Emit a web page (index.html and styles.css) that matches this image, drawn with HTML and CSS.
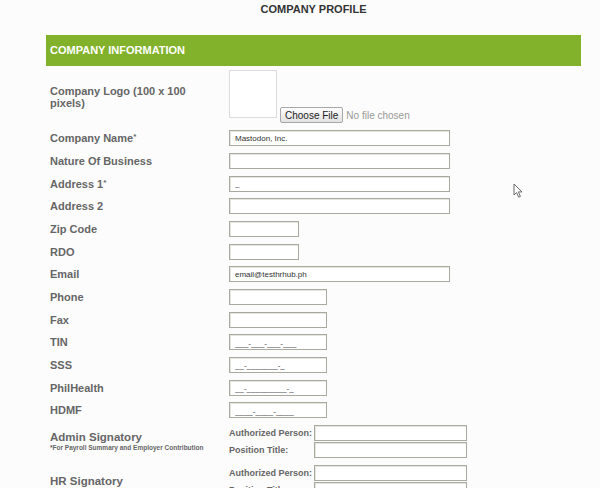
FILE: index.html
```html
<!DOCTYPE html>
<html lang="en">
<head>
    <meta charset="UTF-8">
    <title>Company Profile</title>
    <link rel="stylesheet" href="styles.css">
</head>
<body>
    <div class="page">
        <h1 class="page-title">COMPANY PROFILE</h1>

        <div class="section-head">COMPANY INFORMATION</div>

        <div class="form">
            <!-- logo -->
            <div class="row row-logo">
                <div class="label">Company Logo (100 x 100 pixels)</div>
                <div class="field">
                    <span class="logo-box"></span>
                    <input type="file" class="file">
                </div>
            </div>

            <div class="row">
                <label class="label">Company Name<sup>*</sup></label>
                <div class="field"><input type="text" class="text wide" value="Mastodon, Inc."></div>
            </div>
            <div class="row">
                <label class="label">Nature Of Business</label>
                <div class="field"><input type="text" class="text wide"></div>
            </div>
            <div class="row">
                <label class="label">Address 1<sup>*</sup></label>
                <div class="field"><input type="text" class="text wide" value="_"></div>
            </div>
            <div class="row">
                <label class="label">Address 2</label>
                <div class="field"><input type="text" class="text wide"></div>
            </div>
            <div class="row">
                <label class="label">Zip Code</label>
                <div class="field"><input type="text" class="text short"></div>
            </div>
            <div class="row">
                <label class="label">RDO</label>
                <div class="field"><input type="text" class="text short"></div>
            </div>
            <div class="row">
                <label class="label">Email</label>
                <div class="field"><input type="text" class="text wide" value="email@testhrhub.ph"></div>
            </div>
            <div class="row">
                <label class="label">Phone</label>
                <div class="field"><input type="text" class="text medium"></div>
            </div>
            <div class="row">
                <label class="label">Fax</label>
                <div class="field"><input type="text" class="text medium"></div>
            </div>
            <div class="row">
                <label class="label">TIN</label>
                <div class="field"><input type="text" class="text medium mask" value="___-___-___-___"></div>
            </div>
            <div class="row">
                <label class="label">SSS</label>
                <div class="field"><input type="text" class="text medium mask" value="__-_______-_"></div>
            </div>
            <div class="row">
                <label class="label">PhilHealth</label>
                <div class="field"><input type="text" class="text medium mask" value="__-_________-_"></div>
            </div>
            <div class="row">
                <label class="label">HDMF</label>
                <div class="field"><input type="text" class="text medium mask" value="____-____-____"></div>
            </div>

            <!-- signatories -->
            <div class="row row-sign">
                <div class="label">
                    Admin Signatory
                    <span class="note">*For Payroll Summary and Employer Contribution</span>
                </div>
                <div class="field sign-fields">
                    <span class="sub-label">Authorized Person:</span>
                    <input type="text" class="text sign">
                    <span class="sub-label">Position Title:</span>
                    <input type="text" class="text sign">
                </div>
            </div>
            <div class="row row-sign">
                <div class="label">HR Signatory</div>
                <div class="field sign-fields">
                    <span class="sub-label">Authorized Person:</span>
                    <input type="text" class="text sign">
                    <span class="sub-label">Position Title:</span>
                    <input type="text" class="text sign">
                </div>
            </div>
        </div>
    </div>

    <!-- mouse pointer left in the capture -->
    <svg class="cursor" width="11" height="16" viewBox="0 0 11 16">
        <path d="M1 1 L1 12 L3.6 9.6 L5.6 14.2 L7.4 13.4 L5.4 8.9 L9 8.9 Z" fill="#fff" stroke="#6a6a6a" stroke-width="1" stroke-linejoin="round"/>
    </svg>
</body>
</html>
```

FILE: styles.css
```css
html, body {
    margin: 0;
    overflow: hidden;
}

body {
    background-color: #fcfcfc;
    font-family: "Liberation Sans", Arial, sans-serif;
    color: #666;
}

.page {
    width: 535px;
    margin-left: 46px;
}

/* 제목 */
.page-title {
    margin: 0;
    padding-top: 3px;
    height: 32px;
    font-size: 11px;
    line-height: 13px;
    text-align: center;
    color: #333;
}

.section-head {
    height: 31px;
    line-height: 31px;
    padding-left: 4px;
    background-color: #82b22b;
    color: #fff;
    font-size: 11px;
    font-weight: bold;
}

/* 폼 줄 */
.row {
    display: grid;
    grid-template-columns: 183px 1fr;
    align-items: center;
    height: 22.67px;
}

.row-logo {
    height: 61px;
}

.row-logo .field {
    align-self: start;
    padding-top: 4px;
}

.label {
    padding-left: 4px;
    padding-right: 8px;
    font-size: 11px;
    font-weight: bold;
    line-height: 12px;
    color: #666;
}

.label sup {
    font-size: 8px;
    vertical-align: 3px;
    line-height: 0;
}

.field {
    display: flex;
    align-items: flex-end;
}

.logo-box {
    width: 46px;
    height: 46px;
    border: 1px solid #ddd;
    background: #fff;
}

.file {
    margin-left: 3px;
    margin-bottom: -5px;
    font-family: "Liberation Sans", Arial, sans-serif;
    font-size: 10px;
    color: #999;
}

.file::file-selector-button {
    font-family: "Liberation Sans", Arial, sans-serif;
    font-size: 10px;
    color: #222;
    height: 16px;
    padding: 0 4px;
    margin-right: 3px;
    border: 1px solid #a7a7a7;
    border-radius: 2px;
    background: linear-gradient(#fefefe, #e2e2e2);
}

/* 텍스트 입력 */
.text {
    box-sizing: border-box;
    height: 16px;
    margin: 0;
    padding: 0 5px;
    border: 1px solid #aaa9a0;
    box-shadow: inset 1px 1px 0 #e6e6e1;
    background: #fff;
    font-family: "Liberation Sans", Arial, sans-serif;
    font-size: 8px;
    color: #333;
    outline: none;
}

.wide { width: 221px; }
.medium { width: 98px; }
.short { width: 70px; }
.sign { width: 153px; }

.mask {
    padding-top: 2px;
    color: #444;
}

/* 서명 */
.row-sign {
    height: 40px;
}

.row-sign .label {
    font-size: 11.5px;
    line-height: 13px;
}

.note {
    display: block;
    font-size: 6.5px;
    line-height: 8px;
}

.sign-fields {
    display: grid;
    grid-template-columns: 85px 153px;
    grid-auto-rows: 17px;
    align-items: center;
}

.sub-label {
    font-size: 9px;
    font-weight: bold;
    color: #666;
}

.cursor {
    position: absolute;
    left: 513px;
    top: 183px;
}
```
